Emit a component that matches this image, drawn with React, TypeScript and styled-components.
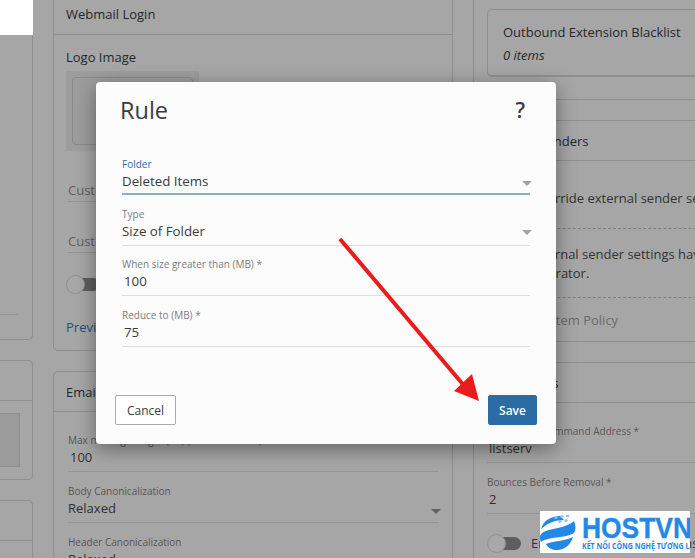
import React from "react";
import styled, { createGlobalStyle } from "styled-components";

const GlobalStyle = createGlobalStyle`
  html, body {
    margin: 0;
    padding: 0;
    background: #a6a6a6;
  }
  body {
    font-family: "Open Sans", "Liberation Sans", sans-serif;
    color: #2c2c2c;
  }
`;

const Page = styled.div`
  position: relative;
  display: flex;
  width: 695px;
  height: 558px;
  overflow: hidden;
  background: #a6a6a6;
`;

const LeftColumn = styled.div`
  flex: none;
  width: 33px;
  margin-right: 20px;
`;

const MiddleColumn = styled.div`
  flex: none;
  width: 400px;
  margin-right: 20px;
`;

const RightColumn = styled.div`
  flex: none;
  width: 260px;
  border-left: 1px solid #8f8f8f;
  padding-left: 13px;
`;

const WhiteBox = styled.div`
  height: 35px;
  background: #fff;
`;

const SideCard = styled.div<{ $height: number; $gap: number }>`
  box-sizing: border-box;
  height: ${(p) => p.$height}px;
  margin-top: ${(p) => p.$gap}px;
  border: 1px solid #8f8f8f;
  border-left: 0;
  border-radius: 0 5px 5px 0;
`;

const SideTopCard = styled.div`
  box-sizing: border-box;
  height: 305px;
  border-right: 1px solid #8f8f8f;
  border-bottom: 1px solid #8f8f8f;
  border-radius: 0 0 5px 0;
  display: flex;
  flex-direction: column;
  justify-content: flex-end;
  padding-bottom: 24px;
`;

const SideRule = styled.div`
  width: 18px;
  border-top: 1px solid #949494;
`;

const SideHeader = styled.div`
  height: 39px;
  border-bottom: 1px solid #8f8f8f;
`;

const SideShade = styled.div`
  box-sizing: border-box;
  width: 20px;
  height: 54px;
  margin-top: 12px;
  background: #9b9b9b;
  border: 1px solid #8f8f8f;
  border-left: 0;
`;

const Card = styled.section<{ $height: number; $top?: number; $open?: boolean }>`
  box-sizing: border-box;
  height: ${(p) => p.$height}px;
  margin-top: ${(p) => p.$top ?? 0}px;
  border: 1px solid #8f8f8f;
  border-top-width: ${(p) => (p.$open ? 0 : 1)}px;
  border-radius: ${(p) => (p.$open ? "0 0 5px 5px" : "5px 5px 0 0")};
`;

const CardHeader = styled.h3<{ $height?: number; $lift?: number }>`
  box-sizing: border-box;
  height: ${(p) => p.$height ?? 40}px;
  margin: 0;
  padding: 0 12px ${(p) => p.$lift ?? 0}px;
  display: flex;
  align-items: center;
  border-bottom: 1px solid #8f8f8f;
  font-size: 13px;
  font-weight: 400;
  color: #24282c;
`;

const CardBody = styled.div`
  padding: 12px 12px 0;
`;

const LogoLabel = styled.div`
  font-size: 13px;
  line-height: 20px;
  color: #24282c;
`;

const LogoShade = styled.div`
  box-sizing: border-box;
  width: 133px;
  height: 80px;
  margin-top: 4px;
  padding: 6px;
  background: #9d9d9d;
`;

const LogoFrame = styled.div`
  box-sizing: border-box;
  height: 68px;
  border: 1px solid #8a8a8a;
  border-radius: 4px;
`;

const GhostInput = styled.div`
  box-sizing: border-box;
  height: 51px;
  margin: 0 2px;
  padding-top: 29px;
  border-bottom: 1px solid #949494;
  font-size: 13px;
  line-height: 20px;
  color: #5f5f5f;
`;

const Toggle = styled.div<{ $top: number }>`
  position: relative;
  width: 33px;
  height: 13px;
  margin-top: ${(p) => p.$top}px;
  margin-left: 1px;
  border-radius: 7px;
  background: #5e5e5e;
  &::before {
    content: "";
    position: absolute;
    left: -1px;
    top: -3px;
    width: 19px;
    height: 19px;
    border-radius: 50%;
    background: #a8a8a8;
    border: 1px solid #929292;
    box-sizing: border-box;
  }
`;

const PreviewLink = styled.div`
  margin-top: 26px;
  font-size: 13px;
  line-height: 20px;
  color: #22527c;
`;

const DimField = styled.div<{ $height?: number }>`
  position: relative;
  box-sizing: border-box;
  height: ${(p) => p.$height ?? 51}px;
  padding-top: 11px;
  border-bottom: 1px solid #949494;
`;

const DimFieldGroup = styled.div`
  padding: 9px 13px 0 14px;
`;

const DimLabel = styled.div`
  font-size: 10px;
  line-height: 16px;
  color: #575757;
  white-space: nowrap;
`;

const DimValue = styled.div<{ $inset?: boolean }>`
  font-size: 13px;
  line-height: 19px;
  padding-left: ${(p) => (p.$inset ? 2 : 0)}px;
  color: #303030;
`;

const DimCaret = styled.span`
  position: absolute;
  right: -2px;
  bottom: 8px;
  border-left: 5px solid transparent;
  border-right: 5px solid transparent;
  border-top: 5px solid #636363;
`;

const RightTopCard = styled.div`
  box-sizing: border-box;
  height: 68px;
  margin-top: 9px;
  padding: 11px 15px;
  border: 1px solid #8f8f8f;
  border-bottom-width: 2px;
  border-radius: 5px;
`;

const RightTitle = styled.div`
  font-size: 13px;
  line-height: 22px;
  white-space: nowrap;
  color: #24282c;
`;

const RightItems = styled.div`
  font-size: 13px;
  line-height: 24px;
  font-style: italic;
  color: #24282c;
`;

const RightRule = styled.div<{ $top: number }>`
  margin: ${(p) => p.$top}px -14px 0 -14px;
  border-top: 1px solid #8f8f8f;
`;

const RightHeader = styled.div<{ $indent?: number }>`
  box-sizing: border-box;
  height: 39px;
  display: flex;
  align-items: center;
  padding-left: ${(p) => p.$indent ?? 16}px;
  font-size: 13px;
  color: #24282c;
  white-space: nowrap;
`;

const RightText = styled.div<{ $top: number }>`
  margin-top: ${(p) => p.$top}px;
  padding-left: 16px;
  font-size: 13px;
  line-height: 19px;
  color: #333;
  white-space: nowrap;
`;

const DashedRule = styled.div<{ $top: number }>`
  margin-top: ${(p) => p.$top}px;
  border-top: 1px dashed #808080;
`;

const ToggleRow = styled.div<{ $top: number; $height?: number; $muted?: boolean }>`
  display: flex;
  align-items: center;
  gap: ${(p) => (p.$muted ? 15 : 10)}px;
  height: ${(p) => p.$height ?? 20}px;
  margin-top: ${(p) => p.$top}px;
  font-size: 13px;
  color: ${(p) => (p.$muted ? "#6c6c6c" : "#333")};
  white-space: nowrap;
`;

const RightFieldGroup = styled.div`
  width: 208px;
  padding-top: 9px;
`;

const RightToggle = styled(Toggle)`
  flex: none;
`;

const Modal = styled.div`
  position: absolute;
  left: 96px;
  top: 82px;
  box-sizing: border-box;
  width: 460px;
  height: 362px;
  display: flex;
  flex-direction: column;
  padding: 0 19px 19px;
  background: #fcfcfc;
  border-radius: 4px;
  box-shadow: 0 5px 20px rgba(0, 0, 0, 0.4);
`;

const ModalHeader = styled.header`
  flex: none;
  display: flex;
  align-items: center;
  justify-content: space-between;
  height: 56px;
  padding: 0 12px 0 5px;
`;

const ModalTitle = styled.h2`
  margin: 0;
  font-size: 23.5px;
  font-weight: 400;
  line-height: 54px;
  color: #3b3b3b;
`;

const HelpMark = styled.span`
  font-size: 21px;
  font-weight: 600;
  color: #3b3b3b;
`;

const Fields = styled.div`
  flex: 1;
  margin: 8px 7px 0;
`;

const Field = styled.div<{ $active?: boolean; $height?: number; $roomy?: boolean }>`
  position: relative;
  box-sizing: border-box;
  height: ${(p) => p.$height ?? 51}px;
  padding-top: ${(p) => (p.$roomy ? 12 : 11)}px;
  border-bottom: ${(p) => (p.$active ? "2px solid #85b1c3" : "1px solid #dedede")};
`;

const FieldLabel = styled.label<{ $active?: boolean }>`
  display: block;
  font-size: 10px;
  line-height: 14px;
  color: ${(p) => (p.$active ? "#2b6ca5" : "#7c7c7c")};
`;

const FieldValue = styled.div<{ $inset?: boolean }>`
  font-size: 13.3px;
  line-height: 20px;
  padding-left: ${(p) => (p.$inset ? 2 : 0)}px;
  color: #3a3a3a;
`;

const Caret = styled.span`
  position: absolute;
  right: -2px;
  top: 35px;
  border-left: 5px solid transparent;
  border-right: 5px solid transparent;
  border-top: 5px solid #a3a3a3;
`;

const ModalFooter = styled.footer`
  flex: none;
  display: flex;
  justify-content: space-between;
`;

const Button = styled.button<{ $primary?: boolean }>`
  box-sizing: border-box;
  height: 30px;
  width: ${(p) => (p.$primary ? 49 : 61)}px;
  padding: 0;
  font-family: inherit;
  font-size: 12px;
  font-weight: ${(p) => (p.$primary ? 600 : 400)};
  color: ${(p) => (p.$primary ? "#fff" : "#3a3a3a")};
  background: ${(p) => (p.$primary ? "#2b6ca5" : "#fff")};
  border: 1px solid ${(p) => (p.$primary ? "#2b6ca5" : "#ababab")};
  border-radius: 2px;
`;

const ArrowSvg = styled.svg`
  position: absolute;
  left: 0;
  top: 0;
  pointer-events: none;
`;

const Brand = styled.div`
  position: absolute;
  left: 540px;
  top: 511px;
  box-sizing: border-box;
  width: 150px;
  height: 42px;
  display: flex;
  padding-top: 3px;
  background: #fff;
  overflow: hidden;
`;

const BrandMark = styled.svg`
  flex: none;
  margin-right: 6px;
`;

const BrandText = styled.div`
  color: #2389e8;
  white-space: nowrap;
  transform-origin: left top;
  transform: scaleX(0.88);
`;

const BrandName = styled.div`
  font-family: "Liberation Sans", sans-serif;
  font-size: 30px;
  line-height: 27px;
  height: 27px;
  font-weight: 700;
  -webkit-text-stroke: 0.4px #2389e8;
`;

const BrandTagline = styled.div`
  font-family: "Open Sans", sans-serif;
  font-size: 8px;
  line-height: 9px;
  font-weight: 700;
`;

const App: React.FC = () => {
  return (
    <>
      <GlobalStyle />
      <Page>
        <LeftColumn>
          <WhiteBox />
          <SideTopCard>
            <SideRule />
          </SideTopCard>
          <SideCard $height={120} $gap={20}>
            <SideHeader />
            <SideShade />
          </SideCard>
          <SideCard $height={90} $gap={20}>
            <SideHeader />
          </SideCard>
        </LeftColumn>

        <MiddleColumn>
          <Card $height={351} $open>
            <CardHeader $height={35} $lift={6}>
              Webmail Login
            </CardHeader>
            <CardBody>
              <LogoLabel>Logo Image</LogoLabel>
              <LogoShade>
                <LogoFrame />
              </LogoShade>
              <GhostInput>Custom Login Title</GhostInput>
              <GhostInput>Custom Login Text</GhostInput>
              <Toggle $top={25} />
              <PreviewLink>Preview</PreviewLink>
            </CardBody>
          </Card>
          <Card $height={220} $top={20}>
            <CardHeader>Email Signing</CardHeader>
            <DimFieldGroup>
              <DimField>
                <DimLabel>Max message length (KB) (0 for unlimited)</DimLabel>
                <DimValue $inset>100</DimValue>
              </DimField>
              <DimField>
                <DimLabel>Body Canonicalization</DimLabel>
                <DimValue>Relaxed</DimValue>
                <DimCaret />
              </DimField>
              <DimField>
                <DimLabel>Header Canonicalization</DimLabel>
                <DimValue>Relaxed</DimValue>
              </DimField>
            </DimFieldGroup>
          </Card>
        </MiddleColumn>

        <RightColumn>
          <RightTopCard>
            <RightTitle>Outbound Extension Blacklist</RightTitle>
            <RightItems>0 items</RightItems>
          </RightTopCard>
          <RightRule $top={22} />
          <RightRule $top={20} />
          <RightHeader $indent={23}>Safe Senders</RightHeader>
          <RightRule $top={0} />
          <ToggleRow $top={27}>
            <RightToggle $top={0} />
            Override external sender settings
          </ToggleRow>
          <DashedRule $top={20} />
          <RightText $top={16}>The external sender settings have been set by the</RightText>
          <RightText $top={0}>administrator.</RightText>
          <DashedRule $top={14} />
          <ToggleRow $top={0} $height={43} $muted>
            <RightToggle $top={0} />
            System Policy
          </ToggleRow>
          <RightRule $top={0} />
          <RightRule $top={20} />
          <RightHeader $indent={19}>Listservs</RightHeader>
          <RightRule $top={0} />
          <RightFieldGroup>
            <DimField>
              <DimLabel>Mailing List Command Address *</DimLabel>
              <DimValue $inset>listserv</DimValue>
            </DimField>
            <DimField>
              <DimLabel>Bounces Before Removal *</DimLabel>
              <DimValue $inset>2</DimValue>
            </DimField>
          </RightFieldGroup>
          <ToggleRow $top={19}>
            <RightToggle $top={0} />
            Enable Digest Subscriptions
          </ToggleRow>
        </RightColumn>

        <Modal>
          <ModalHeader>
            <ModalTitle>Rule</ModalTitle>
            <HelpMark>?</HelpMark>
          </ModalHeader>
          <Fields>
            <Field $active $height={49}>
              <FieldLabel $active>Folder</FieldLabel>
              <FieldValue>Deleted Items</FieldValue>
              <Caret />
            </Field>
            <Field $roomy>
              <FieldLabel>Type</FieldLabel>
              <FieldValue>Size of Folder</FieldValue>
              <Caret />
            </Field>
            <Field $height={50}>
              <FieldLabel>When size greater than (MB) *</FieldLabel>
              <FieldValue $inset>100</FieldValue>
            </Field>
            <Field $roomy>
              <FieldLabel>Reduce to (MB) *</FieldLabel>
              <FieldValue $inset>75</FieldValue>
            </Field>
          </Fields>
          <ModalFooter>
            <Button>Cancel</Button>
            <Button $primary>Save</Button>
          </ModalFooter>
        </Modal>

        <ArrowSvg width="695" height="558" viewBox="0 0 695 558">
          <line x1="340" y1="239" x2="466" y2="388" stroke="#e81c1c" strokeWidth="4" />
          <polygon points="479,401 454,391 472,374" fill="#e81c1c" />
        </ArrowSvg>

        <Brand>
          <BrandMark width="36" height="37" viewBox="0 0 36 37">
            <path d="M1 15 C3 7 11 2 20 2 L24 6 C15 6 8 9 1 15 Z" fill="#2389e8" />
            <path d="M14 3 l3 -1 1 2 -3 1Z M20 2 l3 -1 1 2 -3 1Z M26 1 l3 0 0 2 -3 0Z M18 7 l3 -1 1 2 -3 1Z M24 6 l3 -1 1 2 -3 1Z" fill="#8cc2f2" />
            <path d="M0 22 C2 16 14 15 22 13 C28 11 32 9 34 7 C36 12 36 16 34 19 C28 23 16 23 8 25 C4 26 2 27 1 28 C0 26 0 24 0 22 Z" fill="#2389e8" />
            <path d="M6 30 C12 27 26 27 33 23 C31 30 25 36 17 36 C12 36 8 34 6 30 Z" fill="#2389e8" />
          </BrandMark>
          <BrandText>
            <BrandName>HOSTVN</BrandName>
            <BrandTagline>KẾT NỐI CÔNG NGHỆ TƯƠNG LAI</BrandTagline>
          </BrandText>
        </Brand>
      </Page>
    </>
  );
};

export default App;
